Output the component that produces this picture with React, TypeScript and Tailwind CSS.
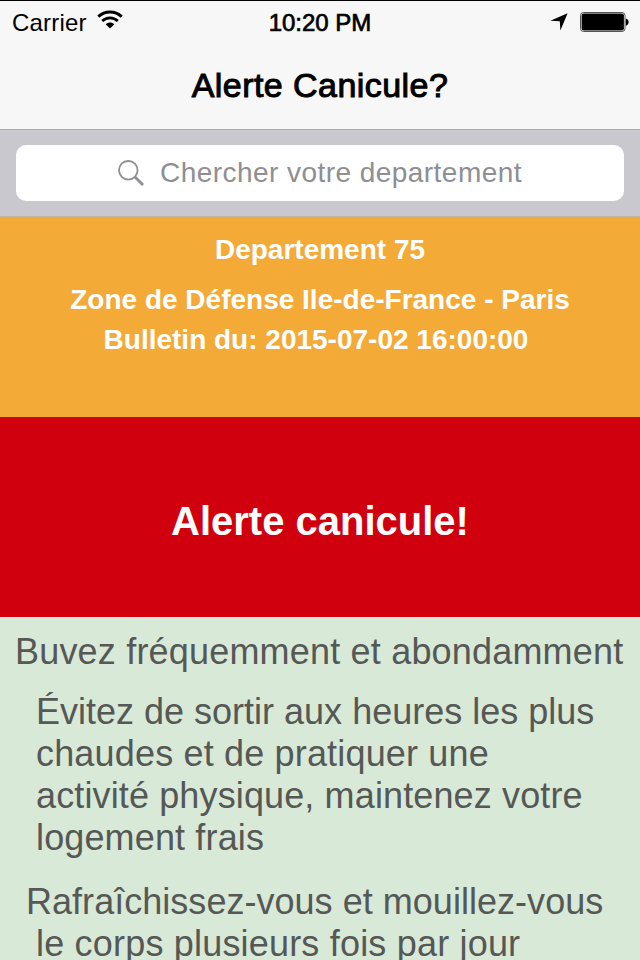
import React from 'react';

function WifiIcon() {
  return (
    <svg width="26" height="20" viewBox="0 0 26 20" fill="none" stroke="#000">
      <path d="M1.3 6.7C8 0.5 18 0.5 24.7 6.7" strokeWidth="3" />
      <path d="M5.2 11C9.8 6.7 16.2 6.7 20.8 11" strokeWidth="2.8" />
      <path d="M13 18.6L8.7 14.3C11.2 12 14.8 12 17.3 14.3Z" fill="#000" stroke="none" />
    </svg>
  );
}

function LocationIcon() {
  return (
    <svg width="18" height="18" viewBox="0 0 18 18">
      <path d="M17.6 0.2L10.4 17.6L9.8 8.3L0.4 7.8Z" fill="#000" />
    </svg>
  );
}

function BatteryIcon() {
  return (
    <svg width="50" height="20" viewBox="0 0 50 20">
      <rect x="0.5" y="0.5" width="44.5" height="19" rx="3" fill="#fff" stroke="#555" />
      <rect x="1.6" y="1.6" width="42.3" height="16.8" rx="2" fill="#000" />
      <path d="M45.8 6.6C49.6 7.6 49.6 12.8 45.8 13.8Z" fill="#000" />
    </svg>
  );
}

function SearchIcon() {
  return (
    <svg width="26" height="26" viewBox="0 0 26 26" fill="none" stroke="#8e8e93">
      <circle cx="10.3" cy="10.3" r="9.3" strokeWidth="1.8" />
      <path d="M17 17L25 25" strokeWidth="2.8" />
    </svg>
  );
}

function StatusBar() {
  return (
    <div className="grid h-10 grid-cols-3 items-center pl-3 pr-[10px] text-2xl leading-10 text-black">
      <div className="flex items-center gap-2.5">
        <span className="pt-0.5 tracking-[0.2px]">Carrier</span>
        <div className="-mt-1">
          <WifiIcon />
        </div>
      </div>
      <span className="whitespace-nowrap pr-0.5 pt-0.5 text-center [-webkit-text-stroke:0.7px_#000]">10:20 PM</span>
      <div className="flex items-center justify-end gap-3">
        <LocationIcon />
        <BatteryIcon />
      </div>
    </div>
  );
}

export default function App() {
  return (
    <div className="flex h-[960px] w-[640px] flex-col overflow-hidden bg-[#d8e9d8] font-['Liberation_Sans',Arial,sans-serif]">
      <header className="h-[130px] shrink-0 border-t border-b border-t-black border-b-[#aeadb6] bg-[#f7f7f8]">
        <StatusBar />
        <h1 className="pt-[22px] text-center text-[34px] leading-[44px] tracking-[0.45px] text-black [-webkit-text-stroke:1px_#000]">
          Alerte Canicule?
        </h1>
      </header>

      {/* Search */}
      <div className="h-[87px] shrink-0 border-b border-[#c2b6a0] bg-[#c9c8ce] px-4 pt-[15px]">
        <div className="flex h-14 items-center justify-center gap-4 rounded-[10px] bg-white text-[28px] text-[#8e8e93]">
          <SearchIcon />
          <span className="whitespace-nowrap leading-[54px] tracking-[0.45px]">Chercher votre departement</span>
        </div>
      </div>

      {/* Bulletin */}
      <section className="h-[200px] shrink-0 bg-[#f4aa36] pt-[13px] text-center text-[28px] font-bold leading-10 text-white">
        <p className="mb-2.5">Departement 75</p>
        <p className="whitespace-nowrap">Zone de Défense Ile-de-France - Paris</p>
        <p className="pr-2">Bulletin du: 2015-07-02 16:00:00</p>
      </section>

      {/* Alert level */}
      <section className="flex h-[200px] shrink-0 items-center justify-center bg-[#d1000e] pt-[7px] text-[40px] font-bold text-white">
        Alerte canicule!
      </section>

      {/* Advice */}
      <section className="whitespace-nowrap pt-[14px] text-4xl leading-[42px] text-[#555855]">
        <p className="pl-[15px] tracking-[0.19px]">Buvez fréquemment et abondamment</p>
        <p className="mt-[18px] pl-9">
          <span className="block">Évitez de sortir aux heures les plus</span>
          <span className="block tracking-[0.17px]">chaudes et de pratiquer une</span>
          <span className="block tracking-[0.13px]">activité physique, maintenez votre</span>
          <span className="block tracking-[0.14px]">logement frais</span>
        </p>
        <p className="mt-[22px] pl-9">
          <span className="-ml-2.5 block tracking-[0.03px]">Rafraîchissez-vous et mouillez-vous</span>
          <span className="block tracking-[0.19px]">le corps plusieurs fois par jour</span>
        </p>
      </section>
    </div>
  );
}
